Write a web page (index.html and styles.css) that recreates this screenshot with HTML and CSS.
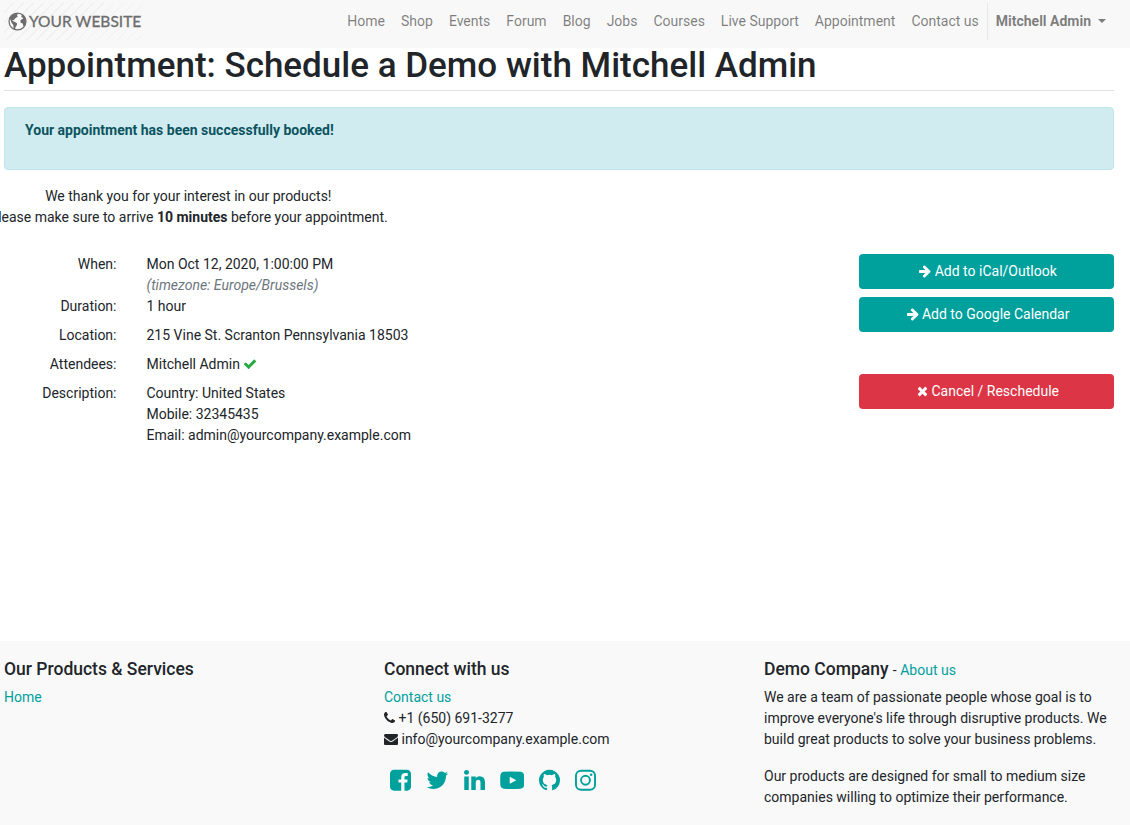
FILE: index.html
```html
<!DOCTYPE html>
<html lang="en">
<head>
<meta charset="utf-8">
<title>Appointment | Your Website</title>
<link rel="stylesheet" href="styles.css">
</head>
<body>
<header class="navbar">
  <a class="brand">
    <svg class="globe" viewBox="0 0 20 20"><circle cx="10" cy="10" r="8.900" fill="#fafafa" stroke="#6c6c6c" stroke-width="1.300"/><path fill="#6c6c6c" d="M1.800 6.500C3.200 3.400 6 1.500 9 1.200L10.400 2.200 9.300 3.300 10.400 4.500 8.600 6 7 7 6.200 8.800 4.700 8.300 4.900 9.600 6.900 10.200 9.700 12.200 9.100 14.300 7.700 16.200 7.500 18.500 6 17.800 5.600 13.800 3.700 11.300 2.700 8.800ZM13.600 2L16.300 3.600 18.600 7.400 18.800 11.200 17.500 14.700 16.200 15 15.500 12.200 13.300 11.200 13 9.300 14.300 7.600 16 7.200 15.400 5.800 13.800 5.200 14.600 3.900Z"/></svg>
    <span class="brand-name">YOUR WEBSITE</span>
  </a>
  <nav class="menu">
    <a>Home</a><a>Shop</a><a>Events</a><a>Forum</a><a>Blog</a><a>Jobs</a><a>Courses</a><a>Live Support</a><a>Appointment</a><a>Contact us</a>
    <a class="user">Mitchell Admin<i class="caret"></i></a>
  </nav>
</header>
<main class="content">
  <h1>Appointment: Schedule a Demo with Mitchell Admin</h1>
  <div class="alert"><b>Your appointment has been successfully booked!</b></div>
  <div class="thanks">We thank you for your interest in our products!<br>Please make sure to arrive <b>10 minutes</b> before your appointment.</div>
  <div class="booking">
    <dl class="details">
      <dt>When:</dt><dd class="tight">Mon Oct 12, 2020, 1:00:00 PM<br><em>(timezone: Europe/Brussels)</em></dd>
      <dt>Duration:</dt><dd>1 hour</dd>
      <dt>Location:</dt><dd>215 Vine St. Scranton Pennsylvania 18503</dd>
      <dt>Attendees:</dt><dd>Mitchell Admin <svg class="icon check" viewBox="0 0 1792 1792" width="14"><path d="M1671 566q0 40-28 68l-724 724-136 136q-28 28-68 28t-68-28l-136-136-362-362q-28-28-28-68t28-68l136-136q28-28 68-28t68 28l294 295 656-657q28-28 68-28t68 28l136 136q28 28 28 68z"/></svg></dd>
      <dt>Description:</dt><dd>Country: United States<br>Mobile: 32345435<br>Email: admin@yourcompany.example.com</dd>
    </dl>
    <div class="actions">
      <a class="btn"><svg class="icon" viewBox="128 0 1536 1792" width="12"><path d="M1600 960q0 54-37 91l-651 651q-39 37-91 37-51 0-90-37l-75-75q-38-38-38-91t38-91l293-293h-704q-52 0-84.500-37.500t-32.500-90.500v-128q0-53 32.500-90.500t84.500-37.500h704l-293-294q-38-36-38-90t38-90l75-75q38-38 90-38 53 0 91 38l651 651q37 35 37 90z"/></svg> Add to iCal/Outlook</a>
      <a class="btn"><svg class="icon" viewBox="128 0 1536 1792" width="12"><path d="M1600 960q0 54-37 91l-651 651q-39 37-91 37-51 0-90-37l-75-75q-38-38-38-91t38-91l293-293h-704q-52 0-84.500-37.500t-32.500-90.500v-128q0-53 32.500-90.500t84.500-37.500h704l-293-294q-38-36-38-90t38-90l75-75q38-38 90-38 53 0 91 38l651 651q37 35 37 90z"/></svg> Add to Google Calendar</a>
      <a class="btn danger"><svg class="icon" viewBox="192 0 1408 1792" width="11"><path d="M1490 1322q0 40-28 68l-136 136q-28 28-68 28t-68-28l-294-294-294 294q-28 28-68 28t-68-28l-136-136q-28-28-28-68t28-68l294-294-294-294q-28-28-28-68t28-68l136-136q28-28 68-28t68 28l294 294 294-294q28-28 68-28t68 28l136 136q28 28 28 68t-28 68l-294 294 294 294q28 28 28 68z"/></svg> Cancel / Reschedule</a>
    </div>
  </div>
</main>
<footer class="footer">
  <section>
    <h5>Our Products &amp; Services</h5>
    <a>Home</a>
  </section>
  <section>
    <h5>Connect with us</h5>
    <a>Contact us</a><br>
    <svg class="icon" viewBox="192 0 1408 1792" width="11"><path d="M1600 1240q0 27-10 70.500t-21 68.500q-21 50-122 106-94 51-186 51-27 0-53-3.500t-57.500-12.500-47-14.500-55.500-20.500-49-18q-98-35-175-83-127-79-264-216t-216-264q-48-77-83-175-3-9-18-49t-20.500-55.500-14.500-47-12.500-57.500-3.500-53q0-92 51-186 56-101 106-122 25-11 68.500-21t70.500-10q14 0 21 3 18 6 53 76 11 19 30 54t35 63.500 31 53.500q3 4 17.500 25t21.500 35.500 7 28.500q0 20-28.500 50t-62 55-62 53-28.500 46q0 9 5 22.500t8.500 20.500 14 24 11.500 19q76 137 174 235t235 174q2 1 19 11.500t24 14 20.500 8.500 22.500 5q18 0 46-28.500t53-62 55-62 50-28.500q14 0 28.500 7t35.500 21.500 25 17.500q25 15 53.500 31t63.500 35 54 30q70 35 76 53 3 7 3 21z"/></svg> +1 (650) 691-3277<br>
    <svg class="icon" viewBox="0 0 1792 1792" width="14"><path d="M1792 710v794q0 66-47 113t-113 47h-1472q-66 0-113-47t-47-113v-794q44 49 101 87 362 246 497 345 57 42 92.500 65.500t94.500 48 110 24.500h2q51 0 110-24.500t94.500-48 92.500-65.500q170-123 498-345 57-39 100-87zm0-294q0 79-49 151t-122 123q-376 261-468 325-10 7-42.500 31t-54 38.500-52 32.500-57.500 27-50 9h-2q-23 0-50-9t-57.500-27-52-32.500-54-38.500-42.500-31q-91-64-262-182.500t-205-142.500q-62-42-117-115.500t-55-136.500q0-78 41.500-130t118.500-52h1472q65 0 112.500 47t47.500 113z"/></svg> info@yourcompany.example.com
    <div class="social">
      <svg viewBox="128 0 1536 1792" width="21"><path d="M1376 128q119 0 203.500 84.500t84.500 203.500v960q0 119-84.500 203.500t-203.500 84.500h-188v-595h199l30-232h-229v-148q0-56 23.500-84t91.500-28l122-1v-207q-63-9-178-9-136 0-217.500 80t-81.500 226v171h-200v232h200v595h-532q-119 0-203.500-84.500t-84.500-203.500v-960q0-119 84.500-203.500t203.500-84.500h960z"/></svg>
      <svg viewBox="64 0 1664 1792" width="22.750"><path d="M1684 408q-67 98-162 167 1 14 1 42 0 130-38 259.500t-115.500 248.500-184.500 210.500-258 146-323 54.500q-271 0-496-145 35 4 78 4 225 0 401-138-105-2-188-64.500t-114-159.500q33 5 61 5 43 0 85-11-112-23-185.500-111.500t-73.500-205.500v-4q68 38 146 41-66-44-105-115t-39-154q0-88 44-163 121 149 294.500 238.500t371.500 99.500q-8-38-8-74 0-134 94.500-228.500t228.500-94.500q140 0 236 102 109-21 205-78-37 115-142 178 93-10 186-50z"/></svg>
      <svg viewBox="128 0 1536 1792" width="21"><path d="M477 625v991h-330v-991h330zm21-306q1 73-50.500 122t-135.500 49h-2q-82 0-132-49t-50-122q0-74 51.500-122.500t134.500-48.500 133 48.500 51 122.500zm1166 729v568h-329v-530q0-105-40.500-164.500t-126.500-59.500q-63 0-105.500 34.500t-63.500 85.500q-11 30-11 81v553h-329q2-399 2-647t-1-296l-1-48h329v144h-2q20-32 41-56t56.500-52 87-43.500 114.500-15.500q171 0 275 113.500t104 332.500z"/></svg>
      <svg viewBox="0 0 1792 1792" width="24.500"><path fill-rule="evenodd" d="M896 256q350 0 610 22 110 10 186 86 60 62 72 160 28 370 0 744-12 98-72 160-76 76-186 86-260 22-610 22t-610-22q-110-10-186-86-60-62-72-160-28-370 0-744 12-98 72-160 76-76 186-86 260-22 610-22zM711 640v512l484-256z"/></svg>
      <svg viewBox="128 0 1536 1792" width="21"><path d="M896 128q209 0 385.500 103t279.500 279.500 103 385.500q0 251-146.500 451.500t-378.500 277.500q-27 5-40-7t-13-30q0-3 .5-76.500t.5-134.500q0-97-52-142 57-6 102.500-18t94-39 81-66.500 53-105 20.500-150.500q0-119-79-206 37-91-8-204-28-9-81 11t-92 44l-38 24q-93-26-192-26t-192 26q-16-11-42.500-27t-83.500-38.500-85-13.500q-45 113-8 204-79 87-79 206 0 85 20.500 150t52.500 105 80.500 67 94 39 102.500 18q-39 36-49 103-21 10-45 15t-57 5-65.500-21.500-55.500-62.500q-19-32-48.500-52t-49.500-24l-20-3q-21 0-29 4.500t-5 11.500 9 14 13 12l7 5q22 10 43.500 38t31.500 51l10 23q13 38 44 61.500t67 30 69.500 7 55.500-3.500l23-4q0 38 .5 88.500t.5 54.500q0 18-13 30t-40 7q-232-77-378.500-277.500t-146.500-451.500q0-209 103-385.500t279.500-279.500 385.500-103z"/></svg>
      <svg viewBox="128 0 1536 1792" width="21"><g fill="none" stroke="#00a09d" stroke-width="140"><rect x="198" y="198" width="1396" height="1396" rx="370"/><circle cx="896" cy="896" r="325"/></g><circle cx="1306" cy="486" r="92"/></svg>
    </div>
  </section>
  <section>
    <h5>Demo Company <small>- <a>About us</a></small></h5>
    <p>We are a team of passionate people whose goal is to improve everyone's life through disruptive products. We build great products to solve your business problems.</p>
    <p>Our products are designed for small to medium size companies willing to optimize their performance.</p>
  </section>
</footer>
</body>
</html>
```
FILE: styles.css
```css
* { box-sizing: border-box; }
body {
  margin: 0;
  height: 825px;
  display: flex;
  flex-direction: column;
  overflow: hidden;
  background: #fff;
  color: #212529;
  font: 14px/21px Roboto, sans-serif;
}
b { font-weight: 700; }
.navbar {
  height: 48px;
  padding: 3px 16px 8px 4px;
  display: flex;
  justify-content: space-between;
  background: #f8f8f8;
}
.brand {
  width: 139px;
  height: 37px;
  padding-left: 4px;
  display: flex;
  align-items: center;
  background: repeating-linear-gradient(135deg, #f8f8f8 0 6.100px, #f0f0f0 6.100px 7.100px);
  color: #6c6c6c;
}
.globe { width: 19px; height: 19px; flex: none; }
.brand-name {
  margin-left: 2px;
  padding-bottom: 2px;
  font: 15.500px/20px Lato, sans-serif;
  white-space: nowrap;
  -webkit-text-stroke: .3px #6c6c6c;
}
.menu { display: flex; color: rgba(0, 0, 0, .5); }
.menu a { padding: 8px; white-space: nowrap; }
.menu .user {
  border-left: 1px solid #e7e7e7;
  padding-left: 8px;
  font-weight: 700;
}
.caret {
  display: inline-block;
  margin-left: 7px;
  vertical-align: 3.500px;
  border-top: 4px solid;
  border-left: 4px solid transparent;
  border-right: 4px solid transparent;
}
.content { flex: 1; padding: 0 16px 0 4px; }
h1 {
  margin: -3px 0 16px;
  padding-bottom: 3px;
  border-bottom: 1px solid #dee2e6;
  font-size: 35px;
  line-height: 42px;
  font-weight: 500;
}
.alert {
  height: 63px;
  margin-bottom: 16px;
  padding: 12px 20px;
  border: 1px solid #bee5eb;
  border-radius: 4px;
  background: #d1ecf1;
  color: #0c5460;
}
.thanks {
  width: 398px;
  margin-left: -14.700px;
  text-align: center;
  white-space: nowrap;
}
.booking {
  margin-top: 26px;
  display: flex;
  justify-content: space-between;
}
.details {
  margin: 0;
  display: grid;
  grid-template-columns: 112.500px auto;
  column-gap: 30px;
}
dt { text-align: right; }
dd { margin: 0 0 8px; }
dd.tight { margin: 0; }
em { color: #6c757d; }
.icon { height: 14px; fill: currentColor; vertical-align: -2px; }
.check { color: #28a745; }
.actions { width: 255px; }
.btn {
  display: block;
  height: 35px;
  margin-bottom: 8px;
  padding: 7px 7px 7px 10px;
  border-radius: 4px;
  background: #00a09d;
  color: #fff;
  text-align: center;
}
.danger { margin-top: 42px; background: #dc3545; }
.footer {
  height: 184px;
  padding: 18px 16px 0 4px;
  display: grid;
  grid-template-columns: 350px 350px 350px;
  column-gap: 30px;
  background: #f9f9f9;
}
.footer a { color: #00a09d; }
.footer h5 {
  margin: 0 0 7px;
  font-size: 17.500px;
  line-height: 21px;
  font-weight: 500;
}
.footer small { font-size: 14px; line-height: 1; font-weight: 400; }
.footer p { margin: 0 0 16px; }
.social {
  margin-top: 18px;
  padding-left: 6px;
  display: flex;
  gap: 15px;
}
.social svg { height: 24.500px; fill: #00a09d; flex: none; }
```
